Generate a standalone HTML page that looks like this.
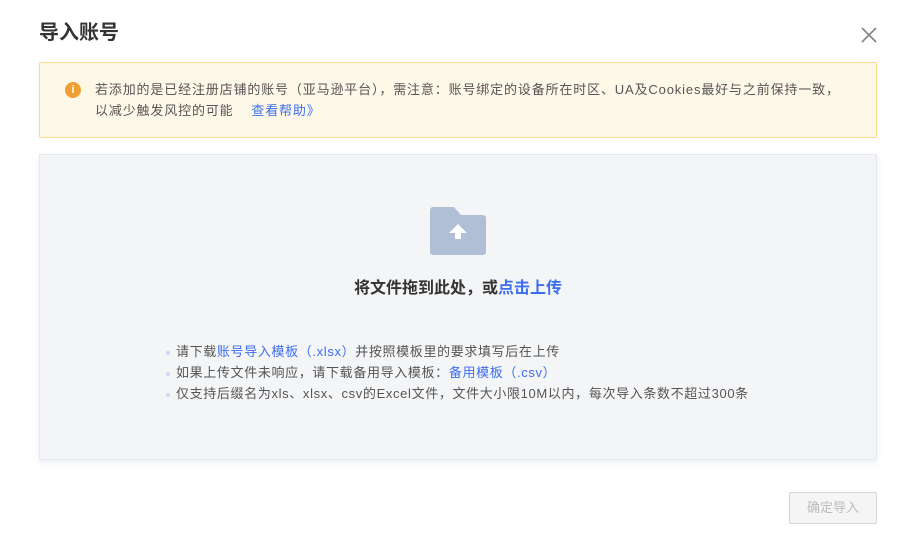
<!DOCTYPE html>
<html><head><meta charset="utf-8"><style>
*{margin:0;padding:0;box-sizing:border-box}
body{width:913px;height:539px;background:#fff;font-family:"Liberation Sans","Noto Sans CJK SC",sans-serif;position:relative;overflow:hidden;color:#333}
.title{position:absolute;left:39px;top:20px;font-size:20px;font-weight:bold;color:#333;line-height:26px}
.close{position:absolute;left:860px;top:26px;width:18px;height:18px}
.alert{position:absolute;left:39px;top:62px;width:838px;height:76px;background:#fef8e8;border:1px solid #fad98a;border-radius:2px}
.alert .ic{position:absolute;left:25px;top:19px;width:16px;height:16px;border-radius:50%;background:#f0a030;color:#fff;font-size:11px;text-align:center;line-height:16px;font-weight:bold}
.alert .t{position:absolute;left:55px;top:16px;width:780px;font-size:13px;line-height:21px;color:#555;letter-spacing:0.85px;white-space:nowrap}
a{color:#3c6ef0;text-decoration:none}
.drop{position:absolute;left:39px;top:154px;width:838px;height:306px;background:#f4f5f7;border:1px solid #e6e8ec;box-shadow:0 3px 6px rgba(200,210,240,.35)}
.folder{position:absolute;left:390px;top:52px}
.main{position:absolute;left:0;width:100%;top:119px;text-align:center;font-size:16px;font-weight:bold;color:#333}
.list{position:absolute;left:126px;top:186px;font-size:13px;line-height:21px;color:#555;letter-spacing:0.64px;white-space:nowrap}
.list div::before{content:"";display:inline-block;width:4px;height:4px;border-radius:50%;background:#cfd8ee;margin-right:6px;vertical-align:middle}
.btn{position:absolute;left:789px;top:492px;width:88px;height:32px;border:1px solid #d5d5d5;background:#f5f5f5;color:#bbb;font-size:13px;text-align:center;line-height:30px;border-radius:2px}
</style></head><body>
<div class="title">导入账号</div>
<svg class="close" viewBox="0 0 18 18"><path d="M2 2L16 16M16 2L2 16" stroke="#888" stroke-width="1.8"/></svg>
<div class="alert"><div class="ic">i</div><div class="t">若添加的是已经注册店铺的账号（亚马逊平台），需注意：账号绑定的设备所在时区、UA及Cookies最好与之前保持一致，<br>以减少触发风控的可能&nbsp;&nbsp;&nbsp;&nbsp;<a>查看帮助》</a></div></div>
<div class="drop">
<svg class="folder" width="56" height="48" viewBox="0 0 56 48"><path d="M3 0H24L31 8H53A3 3 0 0 1 56 11V45A3 3 0 0 1 53 48H3A3 3 0 0 1 0 45V3A3 3 0 0 1 3 0Z" fill="#b1bfd6"/><path d="M28 17L37 26H31V32H25V26H19Z" fill="#fff"/></svg>
<div class="main">将文件拖到此处，或<a>点击上传</a></div>
<div class="list">
<div>请下载<a>账号导入模板（.xlsx）</a>并按照模板里的要求填写后在上传</div>
<div>如果上传文件未响应，请下载备用导入模板：<a>备用模板（.csv）</a></div>
<div>仅支持后缀名为xls、xlsx、csv的Excel文件，文件大小限10M以内，每次导入条数不超过300条</div>
</div>
</div>
<div class="btn">确定导入</div>
</body></html>
